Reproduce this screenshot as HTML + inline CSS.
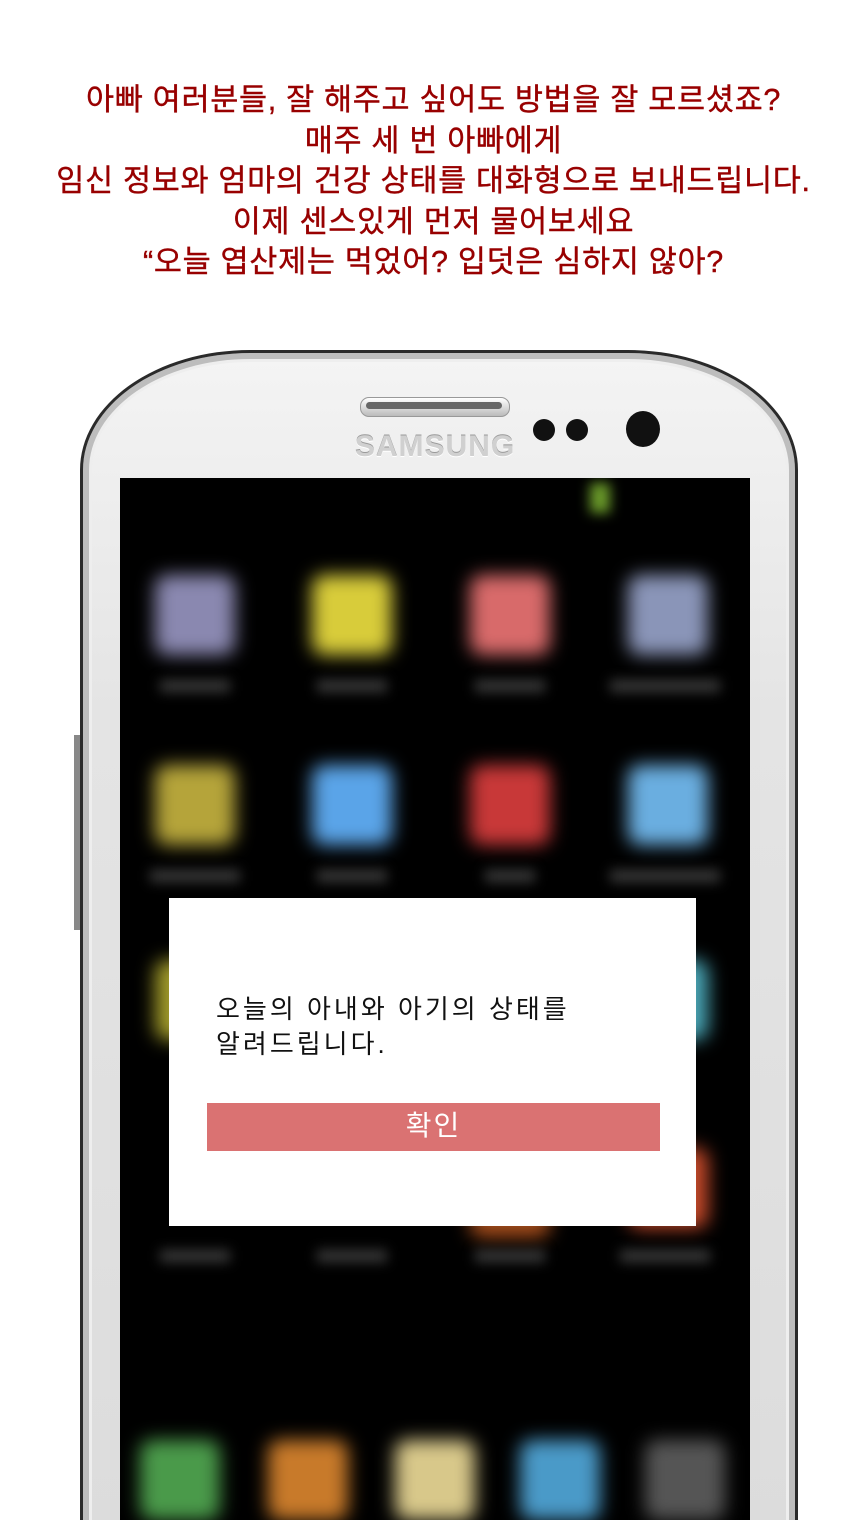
<!DOCTYPE html>
<html style="width:867px;height:1520px;overflow:hidden"><head><meta charset="utf-8"><style>
body{margin:0;width:867px;height:1520px;background:#fff;overflow:hidden;position:relative;font-family:"Liberation Sans","Noto Sans CJK KR",sans-serif}
.t{position:absolute;left:0;width:867px;top:80px;text-align:center;color:#980000;font-size:30.5px;letter-spacing:0.7px;line-height:40.5px;-webkit-text-stroke:0.4px #980000}
.phone{position:absolute;left:80px;top:350px;width:712px;height:1200px;border-radius:170px 170px 0 0/120px 120px 0 0;background:linear-gradient(#f4f4f4,#e4e4e4 30%,#dcdcdc);border:3px solid #2a2a2a;box-shadow:inset 0 0 0 6px #bdbdbd,inset 0 0 0 9px #eee}
.side{position:absolute;background:#888;width:6px}
.screen{position:absolute;left:120px;top:478px;width:630px;height:1060px;background:#000;overflow:hidden}
.ic{position:absolute;width:80px;height:80px;border-radius:12px;filter:blur(9px)}
.lb{position:absolute;width:70px;height:12px;background:#3a3a3a;filter:blur(6px)}
.dlg{position:absolute;left:169px;top:898px;width:527px;height:328px;background:#fff}
.msg{position:absolute;left:47px;top:94px;font-size:26px;letter-spacing:3px;line-height:35px;color:#111}
.btn{position:absolute;left:38px;top:205px;width:453px;height:48px;background:#da7272;color:#fff;font-size:28px;letter-spacing:2px;text-align:center;line-height:46px}
</style></head><body>
<div class="t">아빠 여러분들, 잘 해주고 싶어도 방법을 잘 모르셨죠?<br>매주 세 번 아빠에게<br>임신 정보와 엄마의 건강 상태를 대화형으로 보내드립니다.<br>이제 센스있게 먼저 물어보세요<br>“오늘 엽산제는 먹었어? 입덧은 심하지 않아?</div>
<div class="side" style="left:74px;top:735px;height:195px"></div>
<div class="side" style="left:792px;top:700px;height:110px"></div>
<div class="phone"></div>
<div style="position:absolute;left:360px;top:397px;width:148px;height:18px;border-radius:9px;background:linear-gradient(#fff,#bbb);border:1px solid #999"></div>
<div style="position:absolute;left:366px;top:402px;width:136px;height:7px;border-radius:4px;background:#666"></div>
<div style="position:absolute;left:346px;top:430px;width:178px;text-align:center;font:bold 30px 'Liberation Sans';color:#d0d0d0;letter-spacing:1px;text-shadow:0 1px 0 #fff,0 -1px 0 #999">SAMSUNG</div>
<div style="position:absolute;left:533px;top:419px;width:22px;height:22px;border-radius:50%;background:#111"></div>
<div style="position:absolute;left:566px;top:419px;width:22px;height:22px;border-radius:50%;background:#111"></div>
<div style="position:absolute;left:626px;top:411px;width:34px;height:36px;border-radius:50%;background:#111"></div>
<div class="screen">
<div class="ic" style="left:35px;top:97px;background:#8a88b0"></div>
<div class="ic" style="left:192px;top:97px;background:#d8cc3a"></div>
<div class="ic" style="left:350px;top:97px;background:#d86a6a"></div>
<div class="ic" style="left:508px;top:97px;background:#8a95b8"></div>
<div class="lb" style="left:40px;top:202px"></div><div class="lb" style="left:197px;top:202px"></div><div class="lb" style="left:355px;top:202px"></div><div class="lb" style="left:490px;top:202px;width:110px"></div>
<div class="ic" style="left:35px;top:287px;background:#b5a43a"></div>
<div class="ic" style="left:192px;top:287px;background:#5aa4e8"></div>
<div class="ic" style="left:350px;top:287px;background:#c83838"></div>
<div class="ic" style="left:508px;top:287px;background:#6aaee0"></div>
<div class="lb" style="left:30px;top:392px;width:90px"></div><div class="lb" style="left:197px;top:392px"></div><div class="lb" style="left:365px;top:392px;width:50px"></div><div class="lb" style="left:490px;top:392px;width:110px"></div>
<div class="ic" style="left:35px;top:482px;background:#a09a2a"></div>
<div class="ic" style="left:508px;top:482px;background:#4aa8b8"></div>
<div class="ic" style="left:508px;top:670px;background:#c84a2a"></div>
<div class="ic" style="left:350px;top:720px;height:40px;background:#a04a1a"></div>
<div class="lb" style="left:40px;top:772px"></div><div class="lb" style="left:197px;top:772px"></div><div class="lb" style="left:355px;top:772px"></div><div class="lb" style="left:500px;top:772px;width:90px"></div>
<div class="ic" style="left:20px;top:962px;background:#4a9a4a"></div>
<div class="ic" style="left:148px;top:962px;background:#c87a2a"></div>
<div class="ic" style="left:275px;top:962px;background:#d8c88a"></div>
<div class="ic" style="left:400px;top:962px;background:#4a9ac8"></div>
<div class="ic" style="left:525px;top:962px;background:#555"></div>
<div style="position:absolute;left:470px;top:5px;width:20px;height:30px;background:#6a9a2a;filter:blur(6px)"></div>
</div>
<div class="dlg"><div class="msg">오늘의 아내와 아기의 상태를<br>알려드립니다.</div><div class="btn">확인</div></div>
</body></html>
